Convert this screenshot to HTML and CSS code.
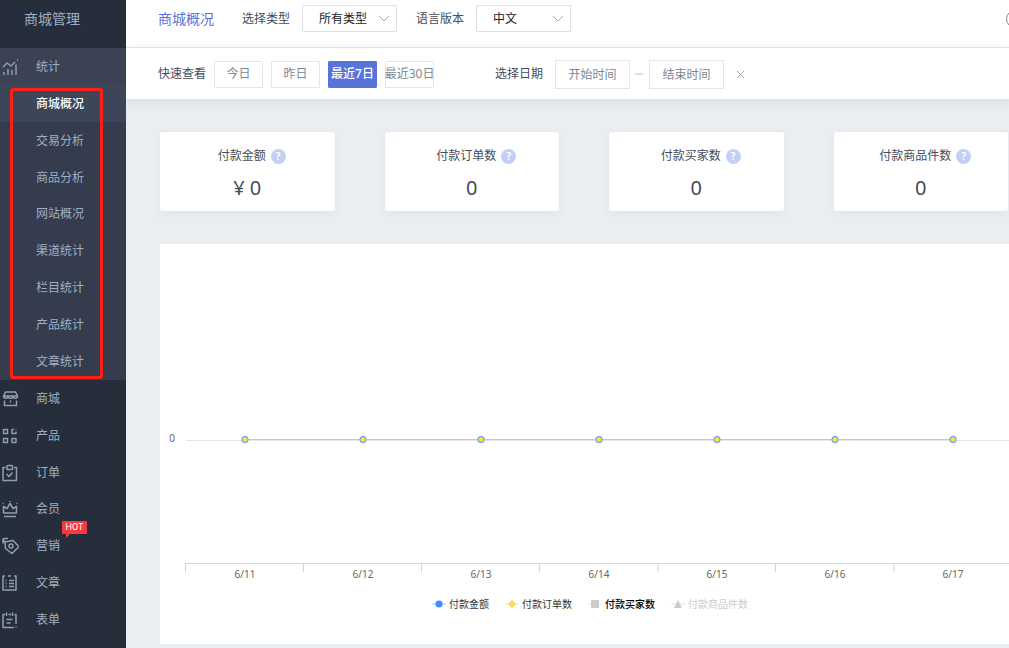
FILE: index.html
```html
<!DOCTYPE html>
<html lang="zh-CN">
<head>
<meta charset="utf-8">
<title>商城概况</title>
<link rel="stylesheet" href="styles.css">
</head>
<body>
<div class="app">
  <aside class="sidebar">
    <div class="brand">商城管理</div>
    <nav class="menu">
      <a class="item open" href="#"><svg class="icon" viewBox="0 0 18 18"><path d="M2 9l4-4 4 3 4-4M3 17v-3M7 17v-6M11 17v-5M15 17V6.500M16 2h1"/></svg>统计</a>
      <div class="submenu">
        <a class="sub current" href="#">商城概况</a>
        <a class="sub" href="#">交易分析</a>
        <a class="sub" href="#">商品分析</a>
        <a class="sub" href="#">网站概况</a>
        <a class="sub" href="#">渠道统计</a>
        <a class="sub" href="#">栏目统计</a>
        <a class="sub" href="#">产品统计</a>
        <a class="sub" href="#">文章统计</a>
        <span class="marker"></span>
      </div>
      <a class="item" href="#"><svg class="icon" viewBox="0 0 18 18"><path d="M4.500 2h10l2 4H2.500zM2.500 6c0 3 4.500 3 4.500 0 0 3 5 3 5 0 0 3 4.500 3 4.500 0M3.500 10.500v5h12v-5M9.500 10.500v2"/></svg>商城</a>
      <a class="item" href="#"><svg class="icon" viewBox="0 0 18 18"><path d="M2.500 2.500h4v4h-4zM2.500 11.500h4v4h-4zM11 11.500h4v4h-4zM13 2.500h-2v4h4v-2M15 2v.5"/></svg>产品</a>
      <a class="item" href="#"><svg class="icon" viewBox="0 0 18 18"><path d="M4.500 3.500H2v13h13.500v-13H13M6 5.500v-3q0-1 1-1h3.500q1 0 1 1v3zM5.500 10l2.500 2.500 3.500-4"/></svg>订单</a>
      <a class="item" href="#"><svg class="icon" viewBox="0 0 18 18"><path d="M2.500 13V6.500L6 8.500l3-5 3 5 3.500-2V13zM3 16.500h12M9 1v1M1.500 3.500h1M15.500 3.500h1"/></svg>会员</a>
      <a class="item" href="#"><svg class="icon" viewBox="0 0 18 18"><path d="M4 5l8-1.500 6 6-7 7-6.500-5zM4 5L1.500 2M2 6.500V3q0-1.500 2-1.500h3"/><circle cx="10" cy="9" r="2"/></svg>营销<span class="hot">HOT</span></a>
      <a class="item" href="#"><svg class="icon" viewBox="0 0 18 18"><path d="M4 2H2v14h13V2h-2M7 2h3M4.500 6.500h1M8 6.500h5M4.500 9.500h1M8 9.500h5M4.500 12.500h1M8 12.500h5"/></svg>文章</a>
      <a class="item" href="#"><svg class="icon" viewBox="0 0 18 18"><path d="M4 3.500H2v13h11M15 13V3.500h-1.500M5.500 1.500v3.500M11.500 1.500v3.500M7.500 3.500h2.500M5.500 8.500h6M5.500 12h4M15 15.500v1"/></svg>表单</a>
    </nav>
  </aside>

  <main class="main">
    <header class="topbar">
      <h1 class="title">商城概况</h1>
      <div class="field">
        <label for="type">选择类型</label>
        <span class="select"><select id="type"><option>所有类型</option></select><svg class="chevron" viewBox="0 0 12 8"><path d="M1 1l5 5 5-5"/></svg></span>
      </div>
      <div class="field">
        <label for="lang">语言版本</label>
        <span class="select"><select id="lang"><option>中文</option></select><svg class="chevron" viewBox="0 0 12 8"><path d="M1 1l5 5 5-5"/></svg></span>
      </div>
      <button class="round" aria-label="更多"></button>
    </header>

    <section class="filters">
      <span>快速查看</span>
      <div class="ranges">
        <button class="range">今日</button>
        <button class="range">昨日</button>
        <button class="range active">最近7日</button>
        <button class="range">最近30日</button>
      </div>
      <label class="date-label" for="start">选择日期</label>
      <input class="date" id="start" type="text" placeholder="开始时间">
      <span class="dash"></span>
      <input class="date" type="text" placeholder="结束时间" aria-label="结束时间">
      <button class="clear" aria-label="清除"><svg viewBox="0 0 9 9"><path d="M1 1l7 7M8 1l-7 7"/></svg></button>
    </section>

    <div class="content">
      <section class="cards">
        <article class="card"><h2>付款金额<span class="help">?</span></h2><p>¥ 0</p></article>
        <article class="card"><h2>付款订单数<span class="help">?</span></h2><p>0</p></article>
        <article class="card"><h2>付款买家数<span class="help">?</span></h2><p>0</p></article>
        <article class="card"><h2>付款商品件数<span class="help">?</span></h2><p>0</p></article>
      </section>

      <section class="chart">
        <svg class="plot" viewBox="0 0 849 350">
          <defs>
            <g id="point"><circle r="3.500" fill="#5b9bea"/><circle r="2.500" fill="#ffdb4d"/></g>
          </defs>
          <path class="grid" d="M26 196.500H849"/>
          <path class="series" d="M85 195.500H793"/>
          <path class="axis" d="M25 319.500H849M25.500 319v9M143.500 319v9M261.500 319v9M379.500 319v9M498 319v9M615.500 319v9M734 319v9"/>
          <use href="#point" x="85" y="195.500"/><use href="#point" x="203" y="195.500"/><use href="#point" x="321" y="195.500"/><use href="#point" x="439" y="195.500"/><use href="#point" x="557" y="195.500"/><use href="#point" x="675" y="195.500"/><use href="#point" x="793" y="195.500"/>
          <g class="ticks">
            <text x="12" y="198">0</text>
            <text x="85" y="334">6/11</text><text x="203" y="334">6/12</text><text x="321" y="334">6/13</text><text x="439" y="334">6/14</text><text x="557" y="334">6/15</text><text x="675" y="334">6/16</text><text x="793" y="334">6/17</text>
          </g>
        </svg>
        <div class="legend">
          <button class="key"><svg viewBox="0 0 14 8"><path d="M0 4h14" stroke="#a5c8fb"/><circle cx="7" cy="4" r="3.500" fill="#448aff"/></svg>付款金额</button>
          <button class="key"><svg viewBox="0 0 14 8"><path d="M0 4h14" stroke="#ffe9a0"/><path d="M7 0l4 4-4 4-4-4z" fill="#ffd84d"/></svg>付款订单数</button>
          <button class="key strong"><svg viewBox="0 0 14 8"><path d="M0 4h14" stroke="#e4e4e4"/><path d="M3 0h8v8H3z" fill="#ccc"/></svg>付款买家数</button>
          <button class="key off"><svg viewBox="0 0 14 8"><path d="M0 4h14" stroke="#e4e4e4"/><path d="M7 0l4 8H3z" fill="#ccc"/></svg>付款商品件数</button>
        </div>
      </section>
    </div>
  </main>
</div>
</body>
</html>
```

FILE: styles.css
```css
* { box-sizing: border-box; }
body {
  margin: 0;
  font: 12px/18px "Noto Sans", "Noto Sans CJK SC", sans-serif;
  color: #444c57;
}
button, input, select { font: inherit; margin: 0; padding: 0; background: #fff; }
a { color: inherit; text-decoration: none; }
h1, h2, p { margin: 0; font-weight: 400; }

.app { display: flex; height: 100vh; overflow: hidden; background: #eaedf2; }

.sidebar {
  display: flex;
  flex-direction: column;
  flex: 0 0 126px;
  padding-bottom: 10px;
  background: #272e3b;
  color: #a0aec4;
}
.brand {
  flex: none;
  height: 48px;
  padding-left: 24px;
  font-size: 14px;
  line-height: 38px;
}
.menu { display: flex; flex-direction: column; flex: 1; min-height: 0; }
.item, .sub { display: flex; align-items: center; flex: 0 1 37px; min-height: 36px; padding-top: 1px; }
.item { position: relative; gap: 17px; padding-left: 1px; }
.item.open { background: #3a4254; }
.icon {
  width: 18px;
  height: 18px;
  fill: none;
  stroke: #909db2;
  stroke-width: 1.5;
  stroke-linejoin: round;
}
.submenu {
  position: relative;
  display: flex;
  flex-direction: column;
  flex: 0 1 296px;
  min-height: 288px;
  background: #343c4e;
}
.sub { padding-left: 36px; }
.sub.current { background: #3d4559; color: #fff; font-weight: 500; }
.marker {
  position: absolute;
  top: 3px;
  bottom: 1px;
  left: 10px;
  width: 93px;
  border: 3px solid #ff1e12;
  border-radius: 3px;
  pointer-events: none;
}
.hot {
  position: absolute;
  top: -6px;
  left: 62px;
  width: 25px;
  border-radius: 1px;
  background: #f23c3c;
  color: #fff;
  font: 9px/13px Roboto, sans-serif;
  text-align: center;
}
.hot::after {
  content: "";
  position: absolute;
  top: 13px;
  left: 4px;
  border-top: 4px solid #f23c3c;
  border-right: 4px solid transparent;
}

.main { flex: 1; min-width: 0; overflow: hidden; }
.topbar {
  display: flex;
  align-items: center;
  height: 48px;
  padding: 0 0 10px 32px;
  border-bottom: 1px solid #e6e6e6;
  background: #fff;
}
.title { margin-right: 28px; color: #5a72d8; font-size: 14px; }
.field { display: flex; align-items: center; gap: 12px; margin-right: 19px; }
.select { position: relative; display: flex; }
.select select {
  width: 95px;
  height: 27px;
  padding-left: 16px;
  border: 1px solid #dfe0e6;
  border-radius: 1px;
  appearance: none;
  color: #222;
}
.chevron {
  position: absolute;
  top: 10px;
  right: 7px;
  width: 12px;
  height: 8px;
  fill: none;
  stroke: #aaa;
  pointer-events: none;
}
.round {
  flex: none;
  width: 18px;
  height: 18px;
  margin: 0 -15px 0 auto;
  border: 1px solid #888;
  border-radius: 50%;
}

.filters {
  position: relative;
  display: flex;
  align-items: center;
  height: 51px;
  padding: 1px 0 0 32px;
  background: #fff;
  box-shadow: 0 2px 10px rgba(60, 80, 100, 0.12);
}
.ranges { display: flex; gap: 8px; margin: 0 61px 0 8px; }
.range {
  display: flex;
  align-items: center;
  justify-content: center;
  width: 49px;
  height: 27px;
  border: 1px solid #e4e5ea;
  border-radius: 1px;
  color: #7d8796;
  white-space: nowrap;
}
.range.active { border-color: #5873da; background: #5873da; color: #fff; font-weight: 500; }
.date-label { margin-right: 12px; }
.date { width: 75px; height: 29px; border: 1px solid #e4e5ea; text-align: center; }
.date::placeholder { color: #7d8796; }
.dash { width: 8px; height: 2px; margin: 0 6px 0 5px; background: #ddd; }
.clear { display: flex; margin-left: 12px; border: 0; }
.clear svg { width: 9px; height: 9px; stroke: #aaa; }

.content { padding: 33px 0 0 34px; }
.cards {
  display: grid;
  grid-template-columns: repeat(4, 1fr);
  gap: 50px;
  margin: 0 1px 33px 0;
}
.card {
  padding: 15px 0 11px;
  border-radius: 3px;
  background: #fff;
  box-shadow: 0 2px 8px rgba(60, 80, 100, 0.05);
  text-align: center;
}
.card h2 {
  display: flex;
  align-items: center;
  justify-content: center;
  gap: 5px;
  padding-left: 8px;
  margin-right: -1px;
  font-size: 12px;
}
.card p { margin-top: 11px; font-size: 20px; line-height: 24px; }
.help {
  width: 15px;
  border-radius: 50%;
  background: #c4cff5;
  color: #fff;
  font-size: 10px;
  font-weight: 700;
  line-height: 15px;
}

.chart { padding-bottom: 31px; background: #fff; }
.plot { display: block; width: 100%; }
.plot path { fill: none; }
.grid { stroke: #e6e6e6; }
.series { stroke: #d8cd8c; }
.axis { stroke: #ccd6eb; }
.ticks { fill: #666; font-size: 10px; text-anchor: middle; }
.legend { display: flex; justify-content: center; gap: 16px; padding: 1px 0 0 11px; }
.key {
  display: flex;
  align-items: center;
  gap: 3px;
  border: 0;
  color: #333;
  font-size: 10px;
  line-height: 18px;
}
.key svg { width: 14px; height: 8px; }
.key.strong { color: #000; font-weight: 500; }
.key.off { color: #ccc; }
```
